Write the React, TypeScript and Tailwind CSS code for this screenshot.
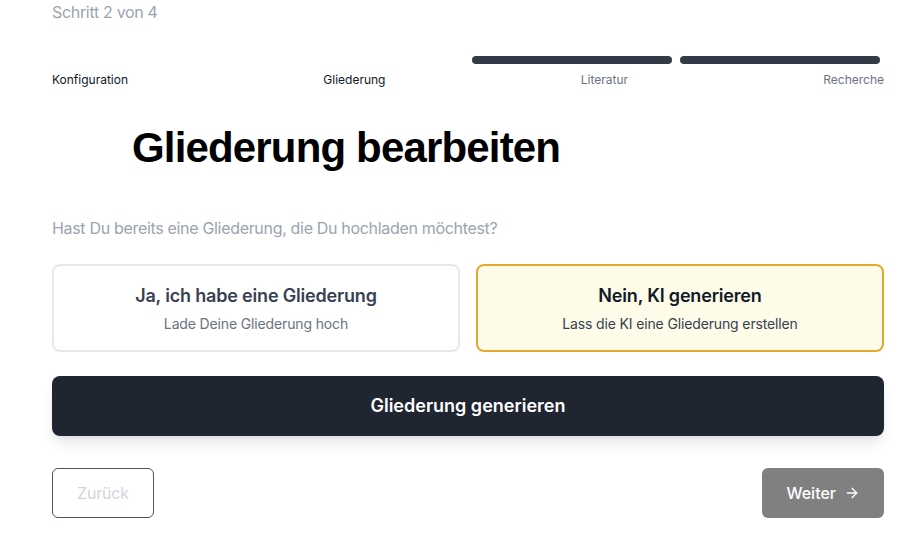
import { ArrowRight } from "lucide-react";

const steps = [
  { label: "Konfiguration", active: true },
  { label: "Gliederung", active: true },
  { label: "Literatur", active: false },
  { label: "Recherche", active: false },
];

export default function App() {
  return (
    <div className="min-h-screen bg-white pl-[52px] pr-[36px] font-['Inter','Liberation_Sans',sans-serif]">
      <p className="text-base leading-6 tracking-[-0.02em] text-[#9ca3af]">Schritt 2 von 4</p>

      {/* Progress */}
      <div className="mt-8">
        <div className="flex">
          {steps.map((s, i) => (
            <div key={s.label} className="flex-1 px-1">
              <div className={i < 2 ? "h-2 rounded-full bg-white" : "h-2 rounded-full bg-[#333a47]"} />
            </div>
          ))}
        </div>
        <div className="mt-2 flex justify-between text-xs leading-4">
          {steps.map((s) => (
            <span key={s.label} className={s.active ? "text-[#111827]" : "text-[#6b7280]"}>
              {s.label}
            </span>
          ))}
        </div>
      </div>

      <h1 className="mt-9 pl-20 font-['Liberation_Sans','Inter',sans-serif] text-[42px] leading-[48px] font-bold tracking-[-0.02em] text-black">
        Gliederung bearbeiten
      </h1>

      <p className="mt-11 text-base leading-6 tracking-[-0.02em] text-[#9ca3af]">
        Hast Du bereits eine Gliederung, die Du hochladen möchtest?
      </p>

      <div className="mt-6 grid grid-cols-2 gap-4">
        <button className="rounded-lg border-2 border-[#e5e7eb] bg-white p-4 text-center">
          <div className="text-lg leading-7 font-semibold tracking-[-0.01em] text-[#374151]">Ja, ich habe eine Gliederung</div>
          <div className="mt-1 text-sm leading-5 tracking-[-0.01em] text-[#6b7280]">Lade Deine Gliederung hoch</div>
        </button>
        <button className="rounded-lg border-2 border-[#e6a730] bg-[#fefce8] p-4 text-center">
          <div className="text-lg leading-7 font-semibold tracking-[-0.01em] text-[#111827]">Nein, KI generieren</div>
          <div className="mt-1 text-sm leading-5 tracking-[-0.01em] text-[#374151]">Lass die KI eine Gliederung erstellen</div>
        </button>
      </div>

      <button className="mt-6 w-full rounded-lg bg-[#1f2531] py-4 text-lg leading-7 font-semibold text-white shadow-lg">
        Gliederung generieren
      </button>

      <div className="mt-8 flex items-center justify-between">
        <button className="rounded-md border border-[#4b5563] px-6 py-3 text-base leading-6 tracking-[-0.01em] text-[#d1d5db]">
          Zurück
        </button>
        <button className="flex items-center gap-2 rounded-md bg-[#808080] px-6 py-[13px] text-base leading-6 font-medium text-white">
          Weiter
          <ArrowRight size={16} strokeWidth={2} />
        </button>
      </div>
    </div>
  );
}
